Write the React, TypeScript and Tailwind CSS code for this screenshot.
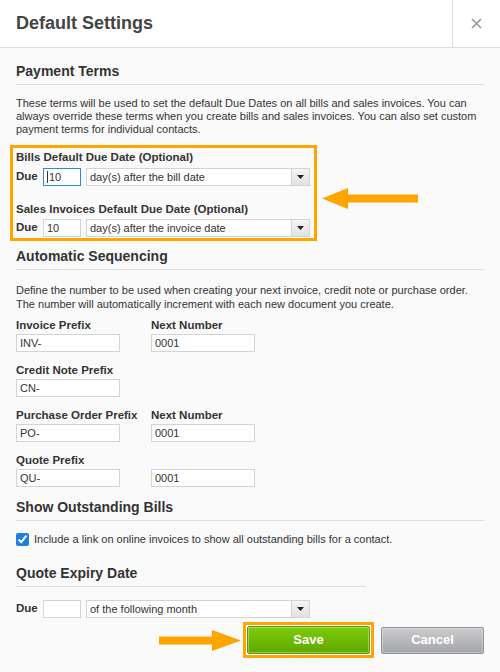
import type { ReactNode } from "react";

const font = "font-['Liberation_Sans',Arial,sans-serif]";

function SectionTitle({ children, narrow }: { children: ReactNode; narrow?: boolean }) {
  return (
    <div className={`border-b border-[#dddddd] pb-[4px] ${narrow ? "w-[350px]" : ""}`}>
      <h2 className="text-[14px] font-bold leading-[17px] text-[#333333]">{children}</h2>
    </div>
  );
}

function TextInput({ value, w, focused }: { value: string; w: string; focused?: boolean }) {
  return (
    <div
      className={`flex h-[18px] items-center border bg-white pl-[3px] text-[11px] text-[#333] ${w} ${
        focused ? "border-[#2b8fc4]" : "border-[#d4d4d4]"
      }`}
    >
      {focused && <span className="mr-px h-[12px] w-px bg-[#333]" />}
      {value}
    </div>
  );
}

function SelectBox({ value }: { value: string }) {
  return (
    <div className="flex h-[18px] w-[224px] items-stretch border border-[#d4d4d4] bg-white text-[11px] text-[#333]">
      <div className="flex flex-1 items-center pl-[3px]">{value}</div>
      <div className="flex w-[18px] items-center justify-center border-l border-[#d4d4d4] bg-gradient-to-b from-[#f4f4f4] to-[#e2e2e2]">
        <svg width="7" height="4" viewBox="0 0 7 4">
          <path d="M0 0h7L3.5 4z" fill="#222" />
        </svg>
      </div>
    </div>
  );
}

function DueRow({ value, select, focused }: { value: string; select: string; focused?: boolean }) {
  return (
    <div className="flex items-center">
      <span className="w-[27px] text-[11.5px] font-bold">Due</span>
      <TextInput value={value} w="w-[38px]" focused={focused} />
      <div className="ml-[5px]">
        <SelectBox value={select} />
      </div>
    </div>
  );
}

function Field({ label, value }: { label?: string; value: string }) {
  return (
    <div className="w-[135px]">
      <div className="h-[15px] text-[11.5px] font-bold leading-[15px]">{label ?? "\u00a0"}</div>
      <div className="mt-[1px]">
        <TextInput value={value} w="w-[104px]" />
      </div>
    </div>
  );
}

export default function App() {
  return (
    <div className={`h-[672px] w-[500px] overflow-hidden bg-[#fafafa] text-[#333333] ${font}`}>
      <header className="flex h-[48px] border-b border-[#dddddd] bg-white">
        <h1 className="flex flex-1 items-center pl-4 text-[18px] font-bold text-[#444444]">Default Settings</h1>
        <div className="flex w-[48px] items-center justify-center border-l border-[#dddddd]">
          <svg width="11" height="11" viewBox="0 0 11 11">
            <path d="M1 1l9 9M10 1l-9 9" stroke="#999" strokeWidth="1.6" />
          </svg>
        </div>
      </header>

      <main className="px-4 pt-[15px]">
        <SectionTitle>Payment Terms</SectionTitle>
        <p className="mt-[12px] text-[11px] leading-[13px]">
          These terms will be used to set the default Due Dates on all bills and sales invoices. You can always override
          these terms when you create bills and sales invoices. You can also set custom payment terms for individual
          contacts.
        </p>

        <div className="mt-[9px] flex items-start">
          <div className="-ml-[6px] w-[307px] border-[3px] border-[#ffa500] pb-[1px] pl-[3px] pt-[2px]">
            <div className="text-[11.5px] font-bold leading-[15px]">Bills Default Due Date (Optional)</div>
            <div className="mt-[3px]">
              <DueRow value="10" select="day(s) after the bill date" focused />
            </div>
            <div className="mt-[16px] text-[11.5px] font-bold leading-[15px]">
              Sales Invoices Default Due Date (Optional)
            </div>
            <div className="mt-[2px]">
              <DueRow value="10" select="day(s) after the invoice date" />
            </div>
          </div>
          <svg className="ml-[5px] mt-[43px]" width="96" height="21" viewBox="0 0 96 21">
            <path d="M0 10.5L26 0v6.5h70v8H26V21z" fill="#ffa500" />
          </svg>
        </div>

        <div className="mt-[7px]">
          <SectionTitle>Automatic Sequencing</SectionTitle>
        </div>
        <p className="mt-[13px] text-[11px] leading-[14px]">
          Define the number to be used when creating your next invoice, credit note or purchase order. The number will
          automatically increment with each new document you create.
        </p>

        <div className="mt-[7px] flex flex-col gap-[11px]">
          <div className="flex">
            <Field label="Invoice Prefix" value="INV-" />
            <Field label="Next Number" value="0001" />
          </div>
          <div className="flex">
            <Field label="Credit Note Prefix" value="CN-" />
          </div>
          <div className="flex">
            <Field label="Purchase Order Prefix" value="PO-" />
            <Field label="Next Number" value="0001" />
          </div>
          <div className="flex">
            <Field label="Quote Prefix" value="QU-" />
            <Field value="0001" />
          </div>
        </div>

        <div className="mt-[12px]">
          <SectionTitle>Show Outstanding Bills</SectionTitle>
        </div>
        <label className="mt-[12px] flex h-[13px] items-center text-[11px]">
          <input type="checkbox" defaultChecked className="m-0 mr-[5px] h-[13px] w-[13px] accent-[#1e7fe0]" />
          Include a link on online invoices to show all outstanding bills for a contact.
        </label>

        <div className="mt-[19px]">
          <SectionTitle narrow>Quote Expiry Date</SectionTitle>
        </div>
        <div className="mt-[13px]">
          <DueRow value="" select="of the following month" />
        </div>

        <div className="mt-[4px] flex items-center justify-end">
          <svg className="mr-[2px]" width="82" height="21" viewBox="0 0 82 21">
            <path d="M82 10.5L53 0v6.5H0v8h53V21z" fill="#ffa500" />
          </svg>
          <div className="border-[3px] border-[#ffa500] bg-white p-px">
            <button className="flex h-[28px] w-[123px] items-center justify-center rounded-[2px] border border-[#5a9a10] bg-gradient-to-b from-[#7fcb0c] to-[#5fa800] text-[13px] font-bold text-white shadow-[inset_0_0_0_1px_rgba(255,255,255,0.35)]">
              Save
            </button>
          </div>
          <button className="ml-[7px] flex h-[27px] w-[103px] items-center justify-center rounded-[2px] border border-[#8e9093] bg-gradient-to-b from-[#cbcccd] to-[#a3a5a8] text-[13px] font-bold text-white shadow-[inset_0_0_0_1px_rgba(255,255,255,0.3)]">
            Cancel
          </button>
        </div>
      </main>
    </div>
  );
}
